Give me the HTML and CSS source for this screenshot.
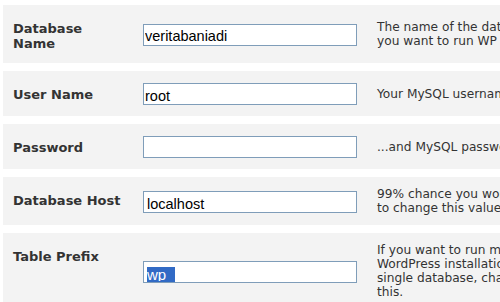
FILE: index.html
```html
<!DOCTYPE html>
<html>
<head>
<meta charset="utf-8">
<link rel="stylesheet" href="styles.css">
</head>
<body>
<div class="page">
  <table class="form-table">
    <tr>
      <th>Database Name</th>
      <td class="field"><input class="text" type="text" value="veritabaniadi"></td>
      <td class="desc">The name of the database you want to run WP in.</td>
    </tr>
    <tr>
      <th>User Name</th>
      <td class="field"><input class="text" type="text" value="root"></td>
      <td class="desc">Your MySQL username</td>
    </tr>
    <tr>
      <th>Password</th>
      <td class="field"><input class="text" type="password" value=""></td>
      <td class="desc">...and MySQL password.</td>
    </tr>
    <tr>
      <th>Database Host</th>
      <td class="field"><input class="text host" type="text" value="localhost"></td>
      <td class="desc">99% chance you won't need to change this value.</td>
    </tr>
    <tr>
      <th>Table Prefix</th>
      <td class="field"><div class="text fake"><span class="sel"><span class="sel-text">wp_</span></span></div></td>
      <td class="desc">If you want to run multiple WordPress installations in a single database, change this.</td>
    </tr>
  </table>
</div>
</body>
</html>
```
FILE: styles.css
```css
html, body {
  margin: 0;
  padding: 0;
  background: #fff;
  overflow: hidden;
}

.page {
  padding: 5px 0 0 3px;
}

.form-table {
  border-collapse: separate;
  border-spacing: 0;
  table-layout: fixed;
  width: 558px;
}

.form-table tr {
  background: #f3f3f3;
}

.form-table th,
.form-table td {
  border-bottom: 8px solid #fff;
}

.form-table th {
  width: 110px;
  padding: 16px 10px 12px;
  text-align: left;
  vertical-align: top;
  font-family: "DejaVu Sans", Verdana, sans-serif;
  font-weight: bold;
  font-size: 13px;
  line-height: 15px;
  color: #333;
}

.form-table td.field {
  width: 214px;
  padding: 12px 10px 11px;
  vertical-align: middle;
}

.form-table td.desc {
  width: 174px;
  padding: 10px;
  vertical-align: middle;
  font-family: "DejaVu Sans", Verdana, sans-serif;
  font-size: 12.2px;
  line-height: 14px;
  color: #333;
}

.text {
  display: block;
  box-sizing: border-box;
  width: 214px;
  height: 22px;
  margin: 0;
  border: 1px solid #7f9db9;
  border-radius: 0;
  background: #fff;
  padding: 3px 1px 0;
  font-family: "Liberation Sans", Arial, sans-serif;
  font-size: 14.5px;
  color: #000;
  outline: none;
}

.text.host {
  padding: 5px 3px 0;
}

.fake {
  padding: 5px 3px 0;
  line-height: 15px;
  overflow: hidden;
  white-space: nowrap;
}

.sel {
  display: inline-block;
  vertical-align: top;
  height: 15px;
  background: #316ac5;
  color: #fff;
}

.sel-text {
  display: inline-block;
  vertical-align: top;
  height: 14px;
  line-height: 16px;
  font-size: 15px;
  overflow: hidden;
}
```
